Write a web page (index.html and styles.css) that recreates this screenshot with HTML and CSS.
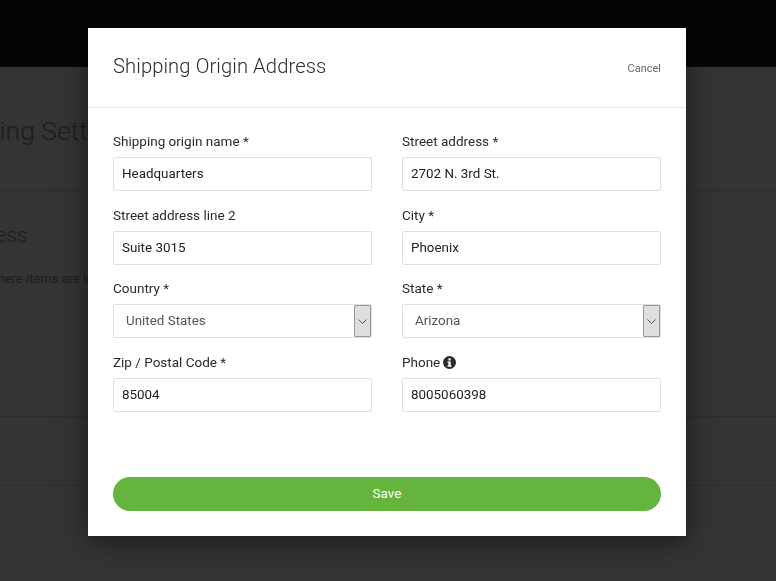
FILE: index.html
```html
<!DOCTYPE html>
<html lang="en">
<head>
<meta charset="utf-8">
<title>Shipping Settings</title>
<link rel="stylesheet" href="styles.css">
</head>
<body>
<div class="page">
  <header class="topbar"></header>
  <main class="settings">
    <h1 class="settings-title">Shipping Settings</h1>
    <section class="settings-section">
      <h2 class="section-title">Shipping Origin Address</h2>
      <p class="section-text">Where items are located and shipped from</p>
    </section>
    <div class="settings-row"></div>
  </main>
</div>
<div class="overlay">
  <div class="modal">
    <div class="modal-head">
      <h2 class="modal-title">Shipping Origin Address</h2>
      <a class="cancel">Cancel</a>
    </div>
    <form class="modal-body">
      <div class="fields">
        <div class="field">
          <label class="field-label">Shipping origin name *</label>
          <input class="input" value="Headquarters">
        </div>
        <div class="field">
          <label class="field-label">Street address *</label>
          <input class="input" value="2702 N. 3rd St.">
        </div>
        <div class="field">
          <label class="field-label">Street address line 2</label>
          <input class="input" value="Suite 3015">
        </div>
        <div class="field">
          <label class="field-label">City *</label>
          <input class="input" value="Phoenix">
        </div>
        <div class="field">
          <label class="field-label">Country *</label>
          <div class="select">
            <span class="select-value">United States</span>
            <span class="select-arrow"><svg width="9" height="5" viewBox="0 0 9 5"><path d="M.5.5l4 4 4-4" fill="none" stroke="#555" stroke-width="1"/></svg></span>
          </div>
        </div>
        <div class="field">
          <label class="field-label">State *</label>
          <div class="select">
            <span class="select-value">Arizona</span>
            <span class="select-arrow"><svg width="9" height="5" viewBox="0 0 9 5"><path d="M.5.5l4 4 4-4" fill="none" stroke="#555" stroke-width="1"/></svg></span>
          </div>
        </div>
        <div class="field">
          <label class="field-label">Zip / Postal Code *</label>
          <input class="input" value="85004">
        </div>
        <div class="field">
          <label class="field-label">Phone
            <svg class="info" width="13" height="13" viewBox="0 0 13 13"><circle cx="6.5" cy="6.5" r="6.5" fill="#2b2b2b"/><rect x="5.4" y="2.3" width="2.3" height="2.2" rx=".5" fill="#fff"/><path d="M4.5 5.4h3.2v4h.9v1.3H4.5V9.4h.9V6.7h-.9z" fill="#fff"/></svg>
          </label>
          <input class="input" value="8005060398">
        </div>
      </div>
      <button class="save" type="button">Save</button>
    </form>
  </div>
</div>
</body>
</html>
```
FILE: styles.css
```css
* { box-sizing: border-box; }
html, body { margin: 0; height: 100%; }
body {
  font-family: Roboto, "Noto Sans", sans-serif;
  background: #343434;
  color: #2b2b2b;
  overflow: hidden;
}
.page { height: 581px; overflow: hidden; }
.topbar { height: 67px; background: #050505; }
.settings { color: #1d1d1d; }
.settings-title {
  margin: 44px 0 0 -66px;
  height: 80px;
  font-size: 26.5px;
  font-weight: 300;
  line-height: 40px;
  border-bottom: 1px solid #2d2d2d;
}
.settings-section { height: 226px; padding-top: 29px; margin-left: -192px; border-bottom: 1px solid #2d2d2d; }
.section-title { margin: 0; font-size: 21px; font-weight: 300; line-height: 30px; }
.section-text { margin: 20px 0 0 178px; font-size: 13px; line-height: 18px; }
.settings-row { height: 69px; border-bottom: 1px solid #2d2d2d; }
.overlay { position: fixed; inset: 0; }
.modal {
  position: absolute;
  left: 88px;
  top: 28px;
  width: 598px;
  height: 508px;
  background: #fff;
  box-shadow: 0 5px 25px rgba(0, 0, 0, .5);
  display: flex;
  flex-direction: column;
}
.modal-head {
  height: 80px;
  padding: 0 25px;
  border-bottom: 1px solid #e6e6e6;
  display: flex;
  justify-content: space-between;
  align-items: center;
}
.modal-title { margin: -3px 0 0; font-size: 20.2px; font-weight: 300; letter-spacing: .1px; color: #2b2b2b; }
.cancel { margin-top: 1px; font-size: 11px; color: #5f6b6f; }
.modal-body { flex: 1; padding: 25px; display: flex; flex-direction: column; justify-content: space-between; }
.fields { display: grid; grid-template-columns: 259px 259px; column-gap: 30px; row-gap: 15.67px; }
.field { display: flex; flex-direction: column; }
.field-label {
  display: flex;
  align-items: center;
  gap: 3px;
  height: 17px;
  margin-bottom: 7px;
  font-size: 13.5px;
  line-height: 17px;
  color: #2b2b2b;
}
.input, .select {
  width: 100%;
  height: 34px;
  border: 1px solid #e0e0e0;
  border-radius: 2px;
  background: #fff;
  font: inherit;
  font-size: 13.4px;
  color: #222;
}
.input { padding: 0 8px 1px; outline: none; }
.select { display: flex; align-items: center; justify-content: space-between; padding: 0 0 0 12px; color: #555; }
.select-value { margin-top: -2px; }
.select-arrow {
  width: 17px;
  height: 32px;
  background: #dedede;
  border: 1px solid #999;
  border-radius: 1px;
  display: flex;
  align-items: center;
  justify-content: center;
}
.save {
  height: 34px;
  border: 0;
  padding: 0 0 2px;
  border-radius: 17px;
  background: #64b43e;
  color: #fff;
  font: inherit;
  font-size: 13.5px;
}
```
